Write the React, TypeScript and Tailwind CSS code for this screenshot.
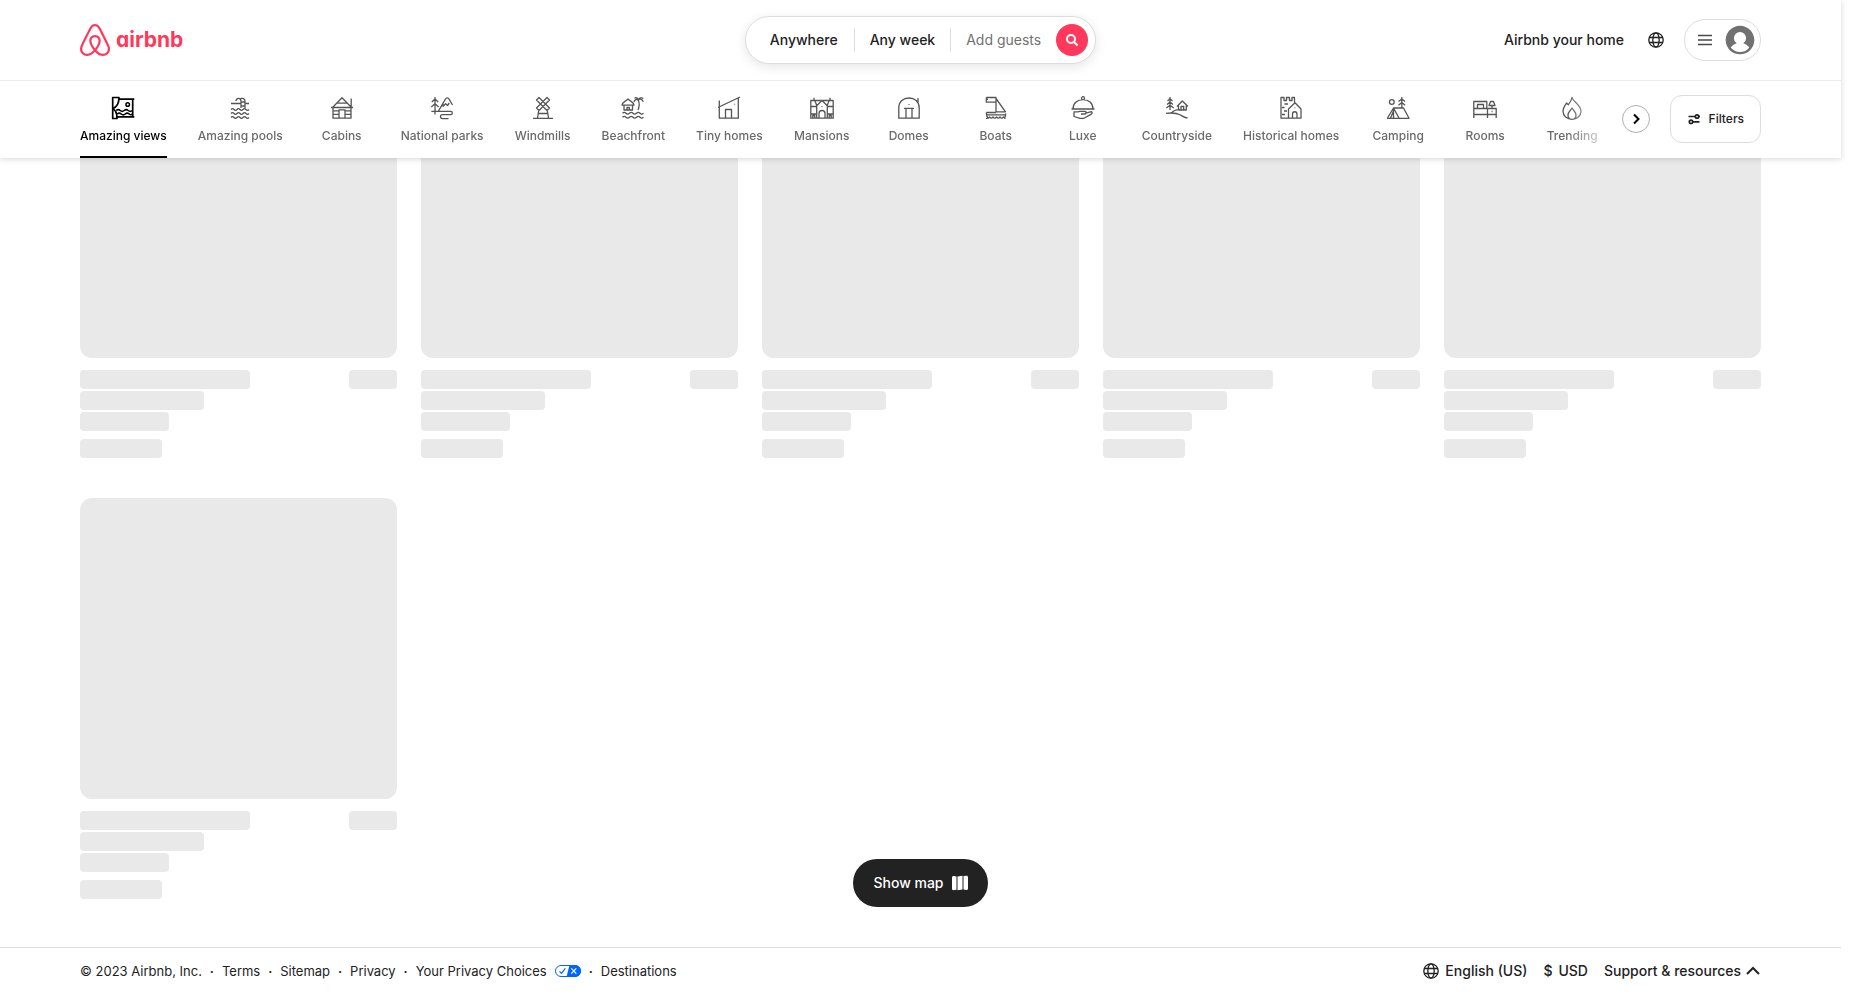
import type { ReactNode } from "react";

type Category = { label: string; icon: ReactNode };

const categories: Category[] = [
  {
    label: "Amazing views",
    icon: (
      <g strokeWidth="1.7">
        <path d="M1.700 1.500H8c0 5.500-2 9.500-6.300 11.200V1.500zM1.700 12.700C5 14 6 16.500 6 22.500H1.700zM8 3.200h15.300M21.700 3.200v17.600M6 20.800h17.300" />
        <path
          strokeWidth="1.5"
          d="M5.200 14.500q2-1.800 4 0t4 0 4 0 4 0M6.200 18q2-1.800 4 0t4 0 4 0 3.500-.5"
        />
        <circle cx="16.700" cy="8.500" r="1.800" strokeWidth="1.500" />
      </g>
    ),
  },
  {
    label: "Amazing pools",
    icon: (
      <>
        <path d="M3 13.500q1.500-1.800 3 0t3 0 3 0 3 0 3 0 3 0M3 17.500q1.500-1.800 3 0t3 0 3 0 3 0 3 0 3 0M3 21.500q1.500-1.800 3 0t3 0 3 0 3 0 3 0 3 0" />
        <path d="M3 7.500h10M17 7.500h4M13 12V5.500C13 1.500 8.500 1.500 8 5M17 12V5.500C17 2.500 14.500 2 12.500 2.700M13 10h4M13 6h4" />
      </>
    ),
  },
  {
    label: "Cabins",
    icon: (
      <path d="M1 11.500h22M2.500 11.500 12 1.800l9.500 9.700M6.500 7.200h11M21.200 2.500v8.500M3 11.500v10.700h18V11.500M9 22V13.800h6V22M3 14.800h6M3 18.300h6M15 14.800h6M15 18.300h6" />
    ),
  },
  {
    label: "National parks",
    icon: (
      <path d="M5 1v17.500M1.800 6 5 3l3.200 3M1.300 11 5 7.700 8.700 11M1.300 15.400h19.500c2 0 2 3.200 0 3.200H12.500c-2.700 0-2.700 4 0 4H18.500M8.300 15.400 15.300 3.200c1-1.800 3-1.800 3.800 0L22.500 9M13 7.300v3l2.700-2.500 1.800 1.700L19.300 7" />
    ),
  },
  {
    label: "Windmills",
    icon: (
      <path d="M2 22.300h20M7.800 14 6.500 22M16.200 14l1.300 8M7 17.500h10M5.500 4 8 1.500l4 4 4-4L18.500 4l-4 4 4 4-2.500 2.500-4-4-4 4L5.500 12l4-4zM9.500 8l2.500-2.500L14.500 8 12 10.500z" />
    ),
  },
  {
    label: "Beachfront",
    icon: (
      <path d="M1 9.200C1.200 6 4.500 5.500 7 3c2.500 2.500 5.800 3 6 6.200zM3 9.500V14h8.500V9.500M6 14v-2.500h2.300V14M17 14c1.500-3.500 1.500-7 .3-10M13 6c.6-2.500 2.800-3 4.300-2 1.500-1.500 4.200-1 5 1.800M13.500 2.200c1.500-1 3.500-.300 3.800 1.800 1-2.300 3.500-2.800 5-1.500M1.500 17.300q1.800-1.800 3.500 0t3.500 0 3.500 0 3.500 0 3.500 0 3.500 0M1.500 21.300q1.800-1.800 3.500 0t3.500 0 3.500 0 3.500 0 3.500 0 3.500 0" />
    ),
  },
  {
    label: "Tiny homes",
    icon: (
      <path d="M1 11.500 23 1M2.300 4.500v17.700h19V2.200M8.500 22v-8.500h6V22M17.500 7.700v.8" />
    ),
  },
  {
    label: "Mansions",
    icon: (
      <path d="M.8 4.500h22.400v17.700H.8zM4 4.500v-2.700M20 4.500v-2.700M6.700 22.200V9.800L12 4.500l5.300 5.300v12.400M.8 10.500h5.900M17.300 10.500h5.900M.8 18h5.900M17.300 18h5.900M9 22v-4.500c0-4 6-4 6 0V22M2.800 22v-2.500h2V22M19.200 22v-2.500h2V22M12 10v.8M5 5l2 5M19 5l-2 5" />
    ),
  },
  {
    label: "Domes",
    icon: (
      <path d="M1.800 22.200V12C1.800 5.500 6.500 2 12 2s10.200 3.500 10.200 10v10.200zM21 2v5M7 12.300h10M9 12.300V22M15 12.300V22M12 8v.8" />
    ),
  },
  {
    label: "Boats",
    icon: (
      <path d="M2.300 1.500H12v14.300h9.500L12 2.500M2.300 1.500v4.700H12M2.300 1.500 3.500 4M2.300 16.500H12M2.300 16.500c0 2 .500 4 1.500 5.500M21.700 17.500c0 1.700-.500 3.200-1 4.500M2.300 18.800h19.400M2 22.300q2 .500 3.500-1.300 1.800 2.300 3.500 0 1.800 2.300 3.500 0 1.800 2.300 3.500 0 1.800 2.300 3.500 0 1 1.500 2 1.300" />
    ),
  },
  {
    label: "Luxe",
    icon: (
      <path d="M.5 13h23M2 13C2 7 6.500 3.700 12 3.700S22 7 22 13M10.500 2.200a1.500 1.500 0 0 1 3 0c0 .8-.7 1.500-1.500 1.500s-1.500-.7-1.500-1.500zM10 18h4c1.500 0 1.500-2.700 0-2.700H9l-2.500.5H3v4.700L9 22.300h4l7.300-4.200c1.400-.8 1-2.600-.8-2.300L14 17.300" />
    ),
  },
  {
    label: "Countryside",
    icon: (
      <path d="M5 1v13M2.500 5 5 2.800 7.500 5M2 8.500 5 6l3 2.500M1.300 12 5 9.200 8.700 12M12 10.500 17.300 5l5.700 5.500M13.500 9.500V14M21.300 9.500V14h-7.500M16 14v-3.500h2.700V14M1 17.300c6-.700 10-.700 14 1.500 2.500 1.500 4.500 3 7.500 3.200M6.500 17c2-2.500 5-3.500 8.500-3.300" />
    ),
  },
  {
    label: "Historical homes",
    icon: (
      <path d="M10.500 22.200H2V1.500h3v3h2.500v-3h3v3H13v-3h2.500v5M9.500 22V13L16 6.800l6 6.200v9.200H9.500M13.500 22v-4c0-3 4.500-3 4.500 0v4M5.500 8H9M3 11.500h2.500M5 15h3M3 18.500h3M15.800 11.500v.8" />
    ),
  },
  {
    label: "Camping",
    icon: (
      <path d="M1 22.300h22L17.500 12h-10L1.500 22M7.500 12 13 22M7.500 12v10M4.500 22l3-7M15.800 1v11M12.500 5.500l3.300-2.500 3.300 2.500M12.500 9.300l3.300-2.800 3.300 2.800M8.200 6a2.400 2.400 0 1 1-4.800 0 2.400 2.400 0 0 1 4.800 0z" />
    ),
  },
  {
    label: "Rooms",
    icon: (
      <path d="M.8 22V5.500h13V12M.8 12.500h22.400V22M.8 18.500h22.400M14.500 12.500V22M4.500 12V8.500h6V12M19 12V9.500M16 9.500l1.500-4h3l1.500 4zM18.500 15.500h1" />
    ),
  },
  {
    label: "Trending",
    icon: (
      <path d="M12 1.500c.5 3.500 9 7.500 9 13.500 0 5-4 8.300-9 8.300S3 20 3 15c0-3.500 2-5.500 3.500-8L8.300 8.800C10 6.500 11.500 4.500 12 1.500zM12 12c-1.500 2.500-4 4-4 7 0 2.700 1.800 4.300 4 4.300s4-1.600 4-4.300c0-3-2.500-4.500-4-7z" />
    ),
  },
];

function Globe() {
  return (
    <svg viewBox="0 0 16 16" className="size-4 fill-none stroke-current" strokeWidth="1.3" aria-hidden="true">
      <circle cx="8" cy="8" r="7.200" />
      <ellipse cx="8" cy="8" rx="3.200" ry="7.200" />
      <path d="M1 5.500h14M1 10.500h14" />
    </svg>
  );
}

function Logo() {
  return (
    <a href="#" aria-label="Airbnb homepage" className="flex items-center gap-[6px] text-[#ff385c]">
      <svg viewBox="2.5 1 27 30" className="h-8 w-[30px] fill-current" preserveAspectRatio="none" aria-hidden="true">
        <path d="M16 1c2.008 0 3.463.963 4.751 3.269l.533 1.025c1.954 3.830 6.114 12.540 7.100 14.836l.145.353c.667 1.591.910 2.472.960 3.396l.010.415.001.228c0 4.062-2.877 6.478-6.357 6.478-2.224 0-4.556-1.258-6.709-3.386l-.257-.260-.172-.179h-.011l-.176.185c-2.044 2.100-4.267 3.420-6.414 3.615l-.280.019-.267.006C5.377 31 2.500 28.584 2.500 24.522l.005-.469c.026-.928.230-1.768.830-3.244l.216-.524c.966-2.298 6.083-12.989 7.707-16.034C12.537 1.963 13.992 1 16 1zm0 2c-1.239 0-2.053.539-2.987 2.210l-.523 1.008c-1.926 3.776-6.060 12.430-7.031 14.692l-.345.836c-.427 1.071-.573 1.655-.605 2.240l-.009.330v.206C4.500 27.395 6.411 29 8.857 29c1.773 0 3.870-1.236 5.831-3.354-2.295-2.938-3.855-6.450-3.855-8.910 0-2.913 1.933-5.386 5.178-5.420 3.223.034 5.156 2.507 5.156 5.420 0 2.456-1.555 5.960-3.855 8.907C19.277 27.766 21.370 29 23.142 29c2.447 0 4.358-1.605 4.358-4.478l-.004-.411c-.019-.672-.170-1.296-.714-2.620l-.248-.600c-1.065-2.478-5.993-12.768-7.538-15.664C18.053 3.539 17.240 3 16 3zm.010 10.316c-2.010.021-3.177 1.514-3.177 3.420 0 1.797 1.180 4.580 2.955 7.044l.210.287.174-.234c1.730-2.385 2.898-5.066 2.989-6.875l.006-.221c0-1.906-1.167-3.400-3.156-3.421h-.001z" />
      </svg>
      <span className="text-[21px] leading-8 font-bold [font-feature-settings:'cv11']">airbnb</span>
    </a>
  );
}

function TopBar() {
  return (
    <div className="flex h-20 items-center px-20">
      <div className="flex flex-1">
        <Logo />
      </div>
      <div className="flex h-12 items-center rounded-full border border-[#dddddd] bg-white pr-[7px] shadow-[0_3px_12px_rgba(0,0,0,0.1)]">
        <button className="pr-4 pl-6 font-medium">Anywhere</button>
        <span className="h-6 w-px bg-[#dddddd]" />
        <button className="px-[15px] font-medium">Any week</button>
        <span className="h-6 w-px bg-[#dddddd]" />
        <button className="flex items-center gap-[15px] pl-[15px] text-[#717171]">
          Add guests
          <span className="flex size-8 items-center justify-center rounded-full bg-[#ff385c] text-white">
            <svg viewBox="0 0 12 12" className="size-3 fill-none stroke-current" strokeWidth="2" aria-hidden="true">
              <circle cx="5" cy="5" r="4" />
              <path d="m8 8 3.500 3.500" />
            </svg>
          </span>
        </button>
      </div>
      <div className="flex flex-1 items-center justify-end">
        <a href="#" className="font-medium">Airbnb your home</a>
        <button aria-label="Choose a language" className="mr-5 ml-6">
          <Globe />
        </button>
        <button
          aria-label="Main menu"
          className="flex h-[42px] items-center gap-3 rounded-full border border-[#dddddd] pr-[5px] pl-3 text-[#717171]"
        >
          <svg viewBox="0 0 16 16" className="size-4 fill-none stroke-[#484848]" strokeWidth="1.600" aria-hidden="true">
            <path d="M1 3.500h14M1 8h14M1 12.500h14" />
          </svg>
          <svg viewBox="0 0 32 32" className="size-[30px] fill-current" aria-hidden="true">
            <path d="M16 .7C7.560.7.7 7.560.7 16S7.560 31.300 16 31.300 31.300 24.440 31.300 16 24.440.7 16 .7zm0 28c-4.020 0-7.600-1.880-9.930-4.810a12.430 12.430 0 0 1 6.450-4.400A6.500 6.500 0 0 1 9.500 14a6.500 6.500 0 0 1 13 0 6.510 6.510 0 0 1-3.020 5.500 12.420 12.420 0 0 1 6.450 4.400A12.670 12.670 0 0 1 16 28.700z" />
          </svg>
        </button>
      </div>
    </div>
  );
}

function CategoryBar() {
  return (
    <div className="flex h-[78px] items-center border-t border-[#ebebeb] px-20 text-xs font-medium">
      <nav
        aria-label="Categories"
        className="flex h-full min-w-0 flex-1 gap-[31px] overflow-hidden [mask-image:linear-gradient(to_right,black_calc(100%-56px),transparent_calc(100%-8px))]"
      >
        {categories.map(({ label, icon }, i) => (
          <button
            key={label}
            className={
              i === 0
                ? "flex min-w-14 shrink-0 flex-col items-center border-b-2 border-black pt-[15px] whitespace-nowrap text-black"
                : "flex min-w-14 shrink-0 flex-col items-center border-b-2 border-transparent pt-[15px] whitespace-nowrap text-[#6a6a6a]"
            }
          >
            <svg
              viewBox="0 0 24 24"
              className={i === 0 ? "size-6 fill-none stroke-black" : "size-6 fill-none stroke-[#555555]"}
              strokeWidth="1.3"
              strokeLinejoin="round"
              aria-hidden="true"
            >
              {icon}
            </svg>
            <span className="mt-2 leading-4">{label}</span>
          </button>
        ))}
      </nav>
      <div className="flex items-center gap-5 pb-px">
        <button
          aria-label="Next categories"
          className="flex size-7 items-center justify-center rounded-full border border-[#b0b0b0] bg-white"
        >
          <svg viewBox="0 0 12 12" className="size-3 fill-none stroke-black" strokeWidth="2" aria-hidden="true">
            <path d="m4 1.500 4.500 4.500L4 10.500" />
          </svg>
        </button>
        <button className="flex h-12 items-center gap-2 rounded-xl border border-[#dddddd] px-4 text-[#222222]">
          <svg viewBox="0 0 14 14" className="size-[14px] fill-none stroke-current" strokeWidth="1.700" aria-hidden="true">
            <circle cx="10" cy="4.500" r="1.700" />
            <circle cx="4" cy="9.800" r="1.700" />
            <path d="M1.500 4.500h6.500M11.500 4.500h1.500M6 9.800h6.500" />
          </svg>
          Filters
        </button>
      </div>
    </div>
  );
}

function SkeletonCard() {
  return (
    <div>
      <div className="aspect-[317/301] rounded-xl bg-[#e9e9e9]" />
      <div className="mt-3 flex justify-between">
        <div className="h-[19px] w-[170px] rounded bg-[#e9e9e9]" />
        <div className="h-[19px] w-12 rounded bg-[#e9e9e9]" />
      </div>
      <div className="mt-[2px] h-[19px] w-[124px] rounded bg-[#e9e9e9]" />
      <div className="mt-[2px] h-[19px] w-[89px] rounded bg-[#e9e9e9]" />
      <div className="mt-2 h-[19px] w-[82px] rounded bg-[#e9e9e9]" />
    </div>
  );
}

function Dot() {
  return <span className="w-5 text-center font-semibold" aria-hidden="true">·</span>;
}

function Footer() {
  return (
    <footer className="sticky bottom-0 z-10 flex h-12 items-center justify-between border-t border-[#dddddd] bg-white px-20 pb-px">
      <div className="flex items-center text-[13px]">
        <span>© 2023 Airbnb, Inc.</span>
        <Dot />
        <a href="#">Terms</a>
        <Dot />
        <a href="#">Sitemap</a>
        <Dot />
        <a href="#">Privacy</a>
        <Dot />
        <a href="#" className="flex items-center gap-2">
          Your Privacy Choices
          <svg viewBox="0 0 26 12" className="h-3 w-[26px]" aria-hidden="true">
            <rect x=".5" y=".5" width="25" height="11" rx="5.500" fill="#fff" stroke="#0066ff" />
            <path d="M14.500 0H20a6 6 0 0 1 0 12h-8.500z" fill="#0066ff" />
            <path d="m4.500 6.300 2 2L10.300 3.300" fill="none" stroke="#0066ff" strokeWidth="1.200" />
            <path d="m16.300 3.300 5 5.400M21.300 3.300l-5 5.400" stroke="#fff" strokeWidth="1.200" />
          </svg>
        </a>
        <Dot />
        <a href="#">Destinations</a>
      </div>
      <div className="flex items-center gap-4 font-medium">
        <button className="flex items-center gap-[6px]">
          <Globe />
          English (US)
        </button>
        <button className="flex items-center gap-[6px]">
          <span>$</span>
          USD
        </button>
        <button className="flex items-center gap-1">
          Support &amp; resources
          <svg viewBox="0 0 16 16" className="size-4 fill-none stroke-current" strokeWidth="2" aria-hidden="true">
            <path d="m2 11 6-6 6 6" />
          </svg>
        </button>
      </div>
    </footer>
  );
}

export default function App() {
  return (
    <div className="mr-[17px] bg-white font-['Inter',sans-serif] text-sm text-[#222222]">
      <header className="sticky top-0 z-20 bg-white shadow-[0_1px_6px_rgba(0,0,0,0.16)]">
        <TopBar />
        <CategoryBar />
      </header>
      <main className="-mt-[101px] grid grid-cols-5 gap-x-6 gap-y-10 px-20 pb-12">
        {Array.from({ length: 6 }, (_, i) => (
          <SkeletonCard key={i} />
        ))}
      </main>
      <Footer />
      <div className="pointer-events-none fixed right-[17px] bottom-[88px] left-0 z-20 flex justify-center">
        <button className="pointer-events-auto flex h-12 items-center gap-2 rounded-full bg-[#222222] px-5 font-medium text-white">
          Show map
          <svg viewBox="0 0 16 16" className="size-4 fill-current" aria-hidden="true">
            <path d="M0 2.500C0 1.500.8.800 1.800 1L4.500 1.600V14.800L1.500 15.200C.6 15.300 0 14.700 0 13.800zM5.500 1.600 10.500.800V14.400L5.500 15.200zM11.500.900 14.500.700C15.400.700 16 1.300 16 2.200V13.500C16 14.500 15.200 15.200 14.200 15L11.500 14.400z" />
          </svg>
        </button>
      </div>
    </div>
  );
}
